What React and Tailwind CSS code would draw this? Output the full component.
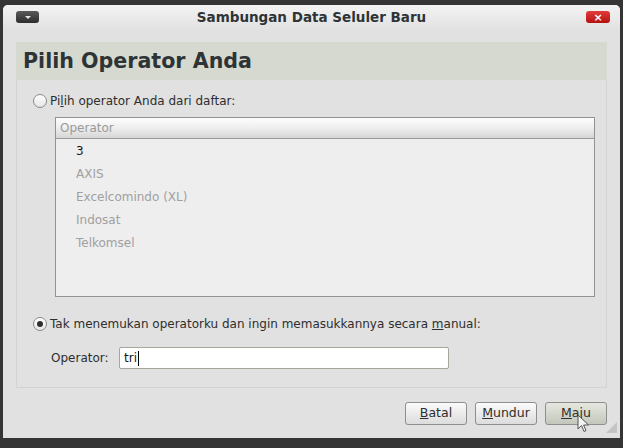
import React from "react";

// Dialog "Sambungan Data Seluler Baru" – GNOME style wizard page
const operators = ["3", "AXIS", "Excelcomindo (XL)", "Indosat", "Telkomsel"];

const Radio = ({ checked }) => (
  <span className="flex h-[14px] w-[14px] shrink-0 items-center justify-center rounded-full border border-[#8a8a8a] bg-gradient-to-b from-white to-[#e6e6e6]">
    {checked && <span className="h-[6px] w-[6px] rounded-full bg-[#2e2e2e]" />}
  </span>
);

const Button = ({ children, hover }) => (
  <button
    className={`flex h-[23px] w-[62px] items-center justify-center rounded-[3px] border border-[#8e8e8e] text-[12.5px] text-[#2e2e2e] ${
      hover
        ? "bg-gradient-to-b from-[#e6e8e0] to-[#c3c7bb]"
        : "bg-gradient-to-b from-[#fbfbfb] to-[#dcdcdc]"
    }`}
  >
    {children}
  </button>
);

export default function App() {
  return (
    <div
      className="relative h-[448px] w-[623px] overflow-hidden bg-[#353535] px-[3px] pt-[5px]"
      style={{ fontFamily: "'DejaVu Sans', sans-serif" }}
    >
      <div className="flex h-[433px] flex-col rounded-t-[5px] bg-[#e1e1e1]">
        {/* title bar */}
        <div className="relative flex h-[25px] shrink-0 items-center justify-center rounded-t-[5px] bg-gradient-to-b from-[#f3f3f3] to-[#e1e1e1]">
          <div className="absolute left-[13px] top-[6px] flex h-[12px] w-[23px] items-center justify-center rounded-[3px] bg-gradient-to-b from-[#5a5a5a] to-[#2e2e2e]">
            <span className="mt-[1px] h-0 w-0 border-x-[3px] border-t-[3px] border-x-transparent border-t-[#e8e8e8]" />
          </div>
          <span className="text-[13.5px] font-bold text-[#2e3436]">Sambungan Data Seluler Baru</span>
          <div className="absolute right-[10px] top-[6px] flex h-[12px] w-[24px] items-center justify-center rounded-[3px] bg-gradient-to-b from-[#e23a3a] to-[#b50f0f]">
            <span className="text-[11px] font-bold leading-none text-white">×</span>
          </div>
        </div>

        {/* content */}
        <div className="flex flex-1 flex-col px-[13px] pt-[12px]">
          <div className="flex h-[346px] flex-col">
            <div className="flex h-[38px] shrink-0 items-center bg-[#d6d9d0] pl-[7px]">
              <h1 className="text-[20.6px] font-bold leading-none text-[#2e3436]">Pilih Operator Anda</h1>
            </div>
            <div className="flex flex-1 flex-col border-x border-b border-[#d3d3cf] pl-[16px] pr-[11px]">
              <label className="mt-[13px] flex h-[16px] items-center gap-[3px] text-[12px] text-[#2e2e2e]">
                <Radio />
                <span>
                  Pi<span className="underline">l</span>ih operator Anda dari daftar:
                </span>
              </label>

              <div className="ml-[22px] mt-[8px] flex h-[180px] flex-col border border-[#929292] bg-[#eeeeee]">
                <div className="flex h-[21px] shrink-0 items-center border-b border-[#9a9a9a] bg-gradient-to-b from-[#fdfdfd] via-[#eeeeee] to-[#d6d6d6] pl-[4px] text-[12px] text-[#9a9a9a]">
                  Operator
                </div>
                {operators.map((op, i) => (
                  <div
                    key={op}
                    className={`flex h-[23px] shrink-0 items-center pl-[20px] text-[12px] ${
                      i === 0 ? "text-[#1a1a1a]" : "text-[#a0a0a0]"
                    }`}
                  >
                    {op}
                  </div>
                ))}
              </div>

              <label className="mt-[19px] flex h-[16px] items-center gap-[3px] text-[12px] text-[#2e2e2e]">
                <Radio checked />
                <span>
                  Tak menemukan operatorku dan ingin memasukkannya secara <span className="underline">m</span>anual:
                </span>
              </label>

              <div className="ml-[18px] mt-[15px] flex items-center">
                <span className="w-[68px] text-[12px] text-[#2e2e2e]">Operator:</span>
                <div className="flex h-[22px] w-[330px] items-center rounded-[2px] border border-[#a3a89c] bg-white pl-[4px] text-[12px] text-[#1a1a1a]">
                  tri<span className="ml-[1px] h-[15px] w-px bg-black" />
                </div>
              </div>
            </div>
          </div>

          {/* buttons */}
          <div className="mt-[14px] flex justify-end gap-[8px]">
            <Button>
              <span className="underline">B</span>atal
            </Button>
            <Button>
              <span className="underline">M</span>undur
            </Button>
            <Button hover>
              <span className="underline">M</span>aju
            </Button>
          </div>
        </div>
      </div>

      {/* mouse pointer */}
      <svg className="absolute left-[577px] top-[414px]" width="14" height="20" viewBox="0 0 14 20">
        <path d="M1 1 L1 15 L4.5 11.5 L7 17.5 L9 16.6 L6.6 11 L11.5 11 Z" fill="#f4f4f4" stroke="#555" strokeWidth="1" strokeLinejoin="round" />
      </svg>
      {/* resize grip */}
      <svg className="absolute left-[604px] top-[420px]" width="14" height="14" viewBox="0 0 14 14">
        <path d="M13 2 L13 13 L2 13 Z" fill="#c4c4c4" />
      </svg>
    </div>
  );
}
